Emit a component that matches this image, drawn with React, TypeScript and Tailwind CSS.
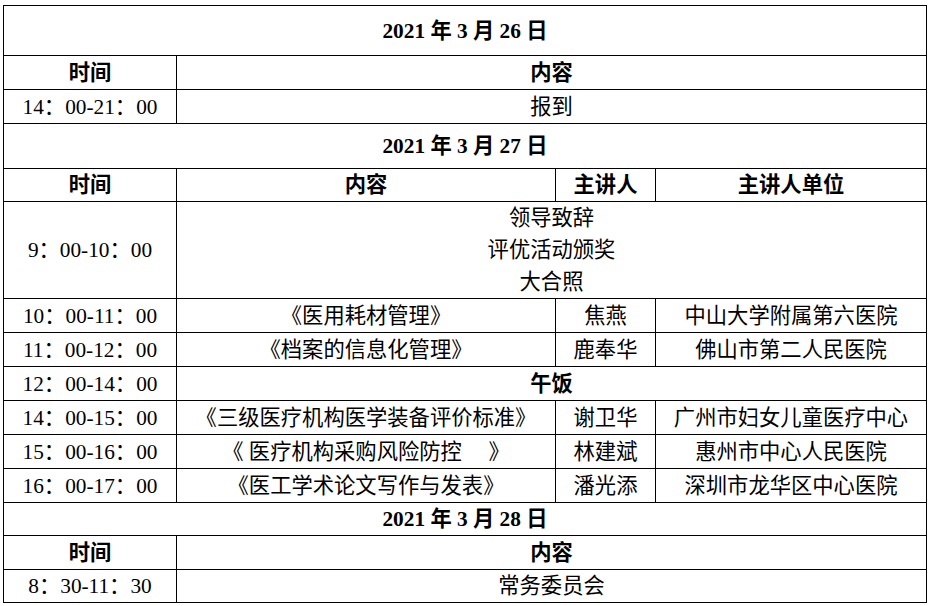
const font = "font-['Liberation_Serif','Noto_Sans_CJK_SC',serif]";

type Talk = { time: string; title: string; speaker: string; unit: string };

const talks: Talk[] = [
  { time: "10：00-11：00", title: "《医用耗材管理》", speaker: "焦燕", unit: "中山大学附属第六医院" },
  { time: "11：00-12：00", title: "《档案的信息化管理》", speaker: "鹿奉华", unit: "佛山市第二人民医院" },
];

const talks2: Talk[] = [
  { time: "14：00-15：00", title: "《三级医疗机构医学装备评价标准》", speaker: "谢卫华", unit: "广州市妇女儿童医疗中心" },
  { time: "15：00-16：00", title: "《 医疗机构采购风险防控 　》", speaker: "林建斌", unit: "惠州市中心人民医院" },
  { time: "16：00-17：00", title: "《医工学术论文写作与发表》", speaker: "潘光添", unit: "深圳市龙华区中心医院" },
];

const cell = "border border-black text-center align-middle p-0 whitespace-nowrap";

function DateRow({ label, h }: { label: string; h: string }) {
  return (
    <tr className={h}>
      <td colSpan={4} className={`${cell} font-bold`}>
        {label}
      </td>
    </tr>
  );
}

function TalkRow({ t }: { t: Talk }) {
  return (
    <tr className="h-[34px]">
      <td className={cell}>{t.time}</td>
      <td className={`${cell} whitespace-pre`}>{t.title}</td>
      <td className={cell}>{t.speaker}</td>
      <td className={cell}>{t.unit}</td>
    </tr>
  );
}

export default function App() {
  return (
    <div className={`w-[930px] h-[606px] bg-white pt-[5px] pl-[3px] text-[21.3px] leading-[24px] text-black ${font}`}>
      <table className="w-[923px] table-fixed border-collapse">
        <colgroup>
          <col className="w-[173px]" />
          <col className="w-[379px]" />
          <col className="w-[100px]" />
          <col className="w-[271px]" />
        </colgroup>
        <tbody>
          <DateRow label="2021 年 3 月 26 日" h="h-[50px]" />
          <tr className="h-[34px]">
            <td className={`${cell} font-bold`}>时间</td>
            <td colSpan={3} className={`${cell} font-bold`}>内容</td>
          </tr>
          <tr className="h-[34px]">
            <td className={cell}>14：00-21：00</td>
            <td colSpan={3} className={cell}>报到</td>
          </tr>
          <DateRow label="2021 年 3 月 27 日" h="h-[45px]" />
          <tr className="h-[33px]">
            <td className={`${cell} font-bold`}>时间</td>
            <td className={`${cell} font-bold`}>内容</td>
            <td className={`${cell} font-bold`}>主讲人</td>
            <td className={`${cell} font-bold`}>主讲人单位</td>
          </tr>
          <tr className="h-[97px]">
            <td className={cell}>9：00-10：00</td>
            <td colSpan={3} className={`${cell} leading-[32px]`}>
              <div>领导致辞</div>
              <div>评优活动颁奖</div>
              <div>大合照</div>
            </td>
          </tr>
          {talks.map((t) => (
            <TalkRow key={t.time} t={t} />
          ))}
          <tr className="h-[34px]">
            <td className={cell}>12：00-14：00</td>
            <td colSpan={3} className={`${cell} font-bold`}>午饭</td>
          </tr>
          {talks2.map((t) => (
            <TalkRow key={t.time} t={t} />
          ))}
          <DateRow label="2021 年 3 月 28 日" h="h-[33px]" />
          <tr className="h-[34px]">
            <td className={`${cell} font-bold`}>时间</td>
            <td colSpan={3} className={`${cell} font-bold`}>内容</td>
          </tr>
          <tr className="h-[33px]">
            <td className={cell}>8：30-11：30</td>
            <td colSpan={3} className={cell}>常务委员会</td>
          </tr>
        </tbody>
      </table>
    </div>
  );
}
